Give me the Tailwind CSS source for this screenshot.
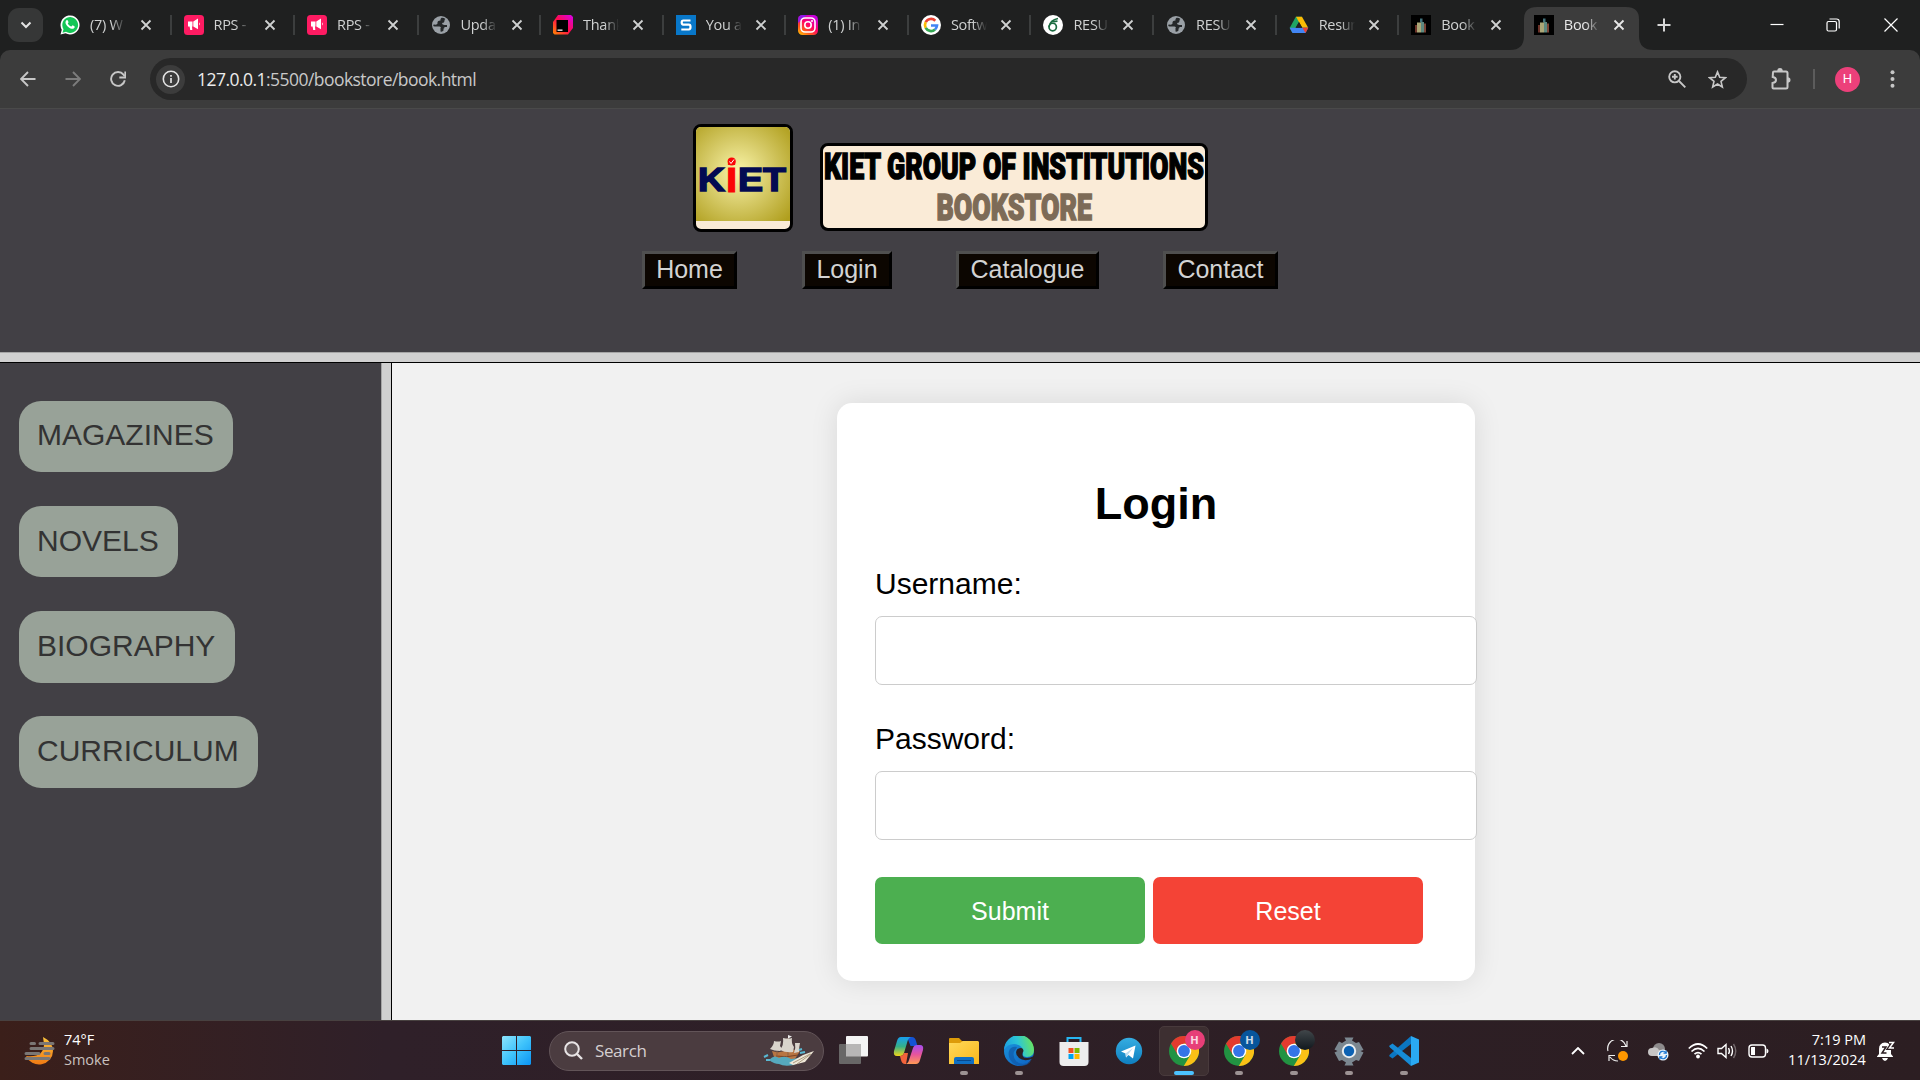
<!DOCTYPE html>
<html lang="en">
<head>
<meta charset="utf-8">
<title>Bookstore</title>
<script src="https://cdn.jsdelivr.net/npm/@tailwindcss/browser@4"></script>
</head>
<body class="w-[1920px] h-[1080px] overflow-hidden flex flex-col bg-[#1f2020] font-['Liberation_Sans',Arial,sans-serif]">
<svg class="absolute w-0 h-0">
  <defs>
    <symbol id="x" viewBox="0 0 12 12"><path d="M1.5 1.5l9 9M10.500 1.5l-9 9" stroke="currentColor" stroke-width="1.8" fill="none"/></symbol>
    <symbol id="horn" viewBox="0 0 20 20"><rect width="20" height="20" rx="3.500" fill="#fe1b62"/><path d="M4 6.500h4.500v5H8L8.300 15H6.200L5.600 11.500H4zM9.300 6.500L14 3.500v10.800L9.300 11.500z" fill="#fff"/><path d="M15 7.200q1.800 1.600 0 3.400z" fill="#fff"/></symbol>
    <symbol id="globe" viewBox="0 0 20 20"><circle cx="10" cy="10" r="9" fill="#9aa0a6"/><path d="M10.500 2.800Q9 4 9.500 5.500 6 5.500 6.500 8.500 6.500 10 3 9.500q-.8 0-.8.800 0 1.200 1.500 1.200H8.500q1.500 0 1.500 2H12.500q1 0 1-1.500H16V10H13.500q-2.500 0-2.500-2 2.500 0 2.500-2.500 0-1.500 1-1.500Q12.500 2.500 10.500 2.800z" fill="#25282a"/><path d="M9.500 13v3.500q2 .5 3-1V13z" fill="#25282a"/></symbol>
    <symbol id="book" viewBox="0 0 20 20"><rect width="20" height="20" fill="#000"/><path d="M9 3.500h2.500v4H9z" fill="#42727c"/><path d="M4 10h2v7.500H4z" fill="#6c3329"/><path d="M6 7.500h4v10H6z" fill="#aba677"/><path d="M10 7h3v10.500h-3z" fill="#5d8980"/><path d="M13 8.500h2v9h-2z" fill="#7c4537"/></symbol>
    <symbol id="chrome" viewBox="0 0 30 30">
      <circle cx="15" cy="15" r="15" fill="#229342"/>
      <path d="M2 7.500A15 15 0 0 1 28 7.500H15L8.700 18.700z" fill="#e33b2e"/>
      <path d="M28 7.500H15l6.500 11.200L14.800 30A15 15 0 0 0 28 7.500z" fill="#fbc116"/>
      <circle cx="15" cy="15" r="7.300" fill="#fff"/><circle cx="15" cy="15" r="5.900" fill="#3474e8"/>
    </symbol>
    <linearGradient id="ig" x1="0" y1="1" x2=".7" y2="0"><stop offset="0" stop-color="#ffd000"/><stop offset=".3" stop-color="#ff5a1a"/><stop offset=".6" stop-color="#ff0069"/><stop offset="1" stop-color="#c800e0"/></linearGradient>
    <linearGradient id="jb" x1="0" y1="1" x2="1" y2="0"><stop offset="0" stop-color="#ff8a00"/><stop offset=".5" stop-color="#ff0a4c"/><stop offset="1" stop-color="#d500f0"/></linearGradient>
    <radialGradient id="gold" cx=".45" cy=".48" r=".72"><stop offset="0" stop-color="#faf5a8"/><stop offset=".45" stop-color="#d8cd6c"/><stop offset="1" stop-color="#b09f1e"/></radialGradient>
    <linearGradient id="win" gradientUnits="userSpaceOnUse" x1="0" y1="0" x2="29" y2="29"><stop offset="0" stop-color="#8de5fd"/><stop offset=".5" stop-color="#3fc3fb"/><stop offset="1" stop-color="#0b94f4"/></linearGradient>
    <linearGradient id="fold" x1="0" y1="0" x2="1" y2="1"><stop offset="0" stop-color="#ffd95a"/><stop offset="1" stop-color="#fab81b"/></linearGradient>
    <linearGradient id="edge1" x1="0" y1=".6" x2="1" y2=".4"><stop offset="0" stop-color="#1b9de2"/><stop offset=".5" stop-color="#2cc6d6"/><stop offset="1" stop-color="#6be55a"/></linearGradient>
    <linearGradient id="edge2" x1="0" y1="0" x2=".7" y2="1"><stop offset="0" stop-color="#1c9be0"/><stop offset="1" stop-color="#0f66c4"/></linearGradient>
    <linearGradient id="co1" x1="0" y1="0" x2="0" y2="1"><stop offset="0" stop-color="#189ff0"/><stop offset=".5" stop-color="#35b089"/><stop offset="1" stop-color="#f0d619"/></linearGradient>
    <linearGradient id="co2" x1="0" y1="0" x2="0" y2="1"><stop offset="0" stop-color="#a54cf0"/><stop offset=".5" stop-color="#e7559b"/><stop offset="1" stop-color="#ff9a55"/></linearGradient>
    <linearGradient id="sun" x1="0" y1="0" x2="0" y2="1"><stop offset="0" stop-color="#fcc33c"/><stop offset="1" stop-color="#f07a14"/></linearGradient>
    <linearGradient id="tg" x1="0" y1="0" x2="0" y2="1"><stop offset="0" stop-color="#35ade1"/><stop offset="1" stop-color="#0f7fc0"/></linearGradient>
  </defs>
</svg>

<!-- Tab strip -->
<header class="h-[50px] shrink-0 flex items-center text-[#cfd1d1] font-['Open_Sans','Noto_Sans',sans-serif] text-[14.500px] tracking-[-0.3px]">
  <div class="ml-2 w-[35px] h-[34px] rounded-[11px] bg-[#363737] flex items-center justify-center shrink-0"><svg class="w-3 h-2" viewBox="0 0 12 8"><path d="M1.500 1.500L6 6l4.500-4.500" stroke="#e3e3e3" stroke-width="2" fill="none"/></svg></div>
  <nav class="ml-[5px] flex h-full">
    <div class="w-[123.5px] flex items-center pl-3"><svg class="w-5 h-5 shrink-0" viewBox="0 0 20 20"><path d="M.5 19.500l1.300-4.800A9.500 9.500 0 1 1 5.500 18.300z" fill="#fff"/><path d="M2.500 17.700l1-3.500A7.900 7.900 0 1 1 6 16.700z" fill="#14c656"/><path d="M6.300 5.500c1-1 1.500-.2 2.200 1.600.3.800-1.200 1-.5 2 .8 1.200 1.800 2 3 2.500.7.300 1.200-1.600 2-1.200 1.700.9 2 1 1.600 2-1 2-3.600 1.600-6-.2C6.500 10.700 5.200 8.500 5.500 7c.1-.6.400-1.100.8-1.500z" fill="#fff"/></svg><span class="ml-2.5 w-9 overflow-hidden whitespace-nowrap [mask-image:linear-gradient(to_right,#000_60%,transparent)]">(7) W</span><svg class="ml-[14px] w-3 h-3"><use href="#x"/></svg><i class="ml-auto w-0.5 h-5 bg-[#3c3e3e]"></i></div>
    <div class="w-[123.5px] flex items-center pl-3"><svg class="w-5 h-5 shrink-0"><use href="#horn"/></svg><span class="ml-2.5 w-9 overflow-hidden whitespace-nowrap [mask-image:linear-gradient(to_right,#000_60%,transparent)]">RPS -</span><svg class="ml-[14px] w-3 h-3"><use href="#x"/></svg><i class="ml-auto w-0.5 h-5 bg-[#3c3e3e]"></i></div>
    <div class="w-[123.5px] flex items-center pl-3"><svg class="w-5 h-5 shrink-0"><use href="#horn"/></svg><span class="ml-2.5 w-9 overflow-hidden whitespace-nowrap [mask-image:linear-gradient(to_right,#000_60%,transparent)]">RPS -</span><svg class="ml-[14px] w-3 h-3"><use href="#x"/></svg><i class="ml-auto w-0.5 h-5 bg-[#3c3e3e]"></i></div>
    <div class="w-[122.6px] flex items-center pl-3"><svg class="w-5 h-5 shrink-0"><use href="#globe"/></svg><span class="ml-2.5 w-9 overflow-hidden whitespace-nowrap [mask-image:linear-gradient(to_right,#000_60%,transparent)]">Upda</span><svg class="ml-[14px] w-3 h-3"><use href="#x"/></svg><i class="ml-auto w-0.5 h-5 bg-[#3c3e3e]"></i></div>
    <div class="w-[122.6px] flex items-center pl-3"><svg class="w-5 h-5 shrink-0" viewBox="0 0 20 20"><path d="M5 0h13l2 2v11l-5 6.500H1.500L0 18V7z" fill="url(#jb)"/><path d="M3.500 5H15v12H3.500z" fill="#000"/><path d="M4.500 14.500h5v1.300h-5z" fill="#fff"/></svg><span class="ml-2.5 w-9 overflow-hidden whitespace-nowrap [mask-image:linear-gradient(to_right,#000_60%,transparent)]">Thank</span><svg class="ml-[13px] w-3 h-3"><use href="#x"/></svg><i class="ml-auto w-0.5 h-5 bg-[#3c3e3e]"></i></div>
    <div class="w-[122.6px] flex items-center pl-3"><svg class="w-5 h-5 shrink-0" viewBox="0 0 20 20"><path d="M0 0h20v20H0z" fill="#0877c9"/><path d="M14.500 5.500H7.300Q5.700 5.500 5.700 7.500t1.600 2.200h5.500q1.700 0 1.700 2.300t-1.700 2.500H5.300" fill="none" stroke="#fff" stroke-width="2.200"/></svg><span class="ml-2.5 w-9 overflow-hidden whitespace-nowrap [mask-image:linear-gradient(to_right,#000_60%,transparent)]">You a</span><svg class="ml-[13px] w-3 h-3"><use href="#x"/></svg><i class="ml-auto w-0.5 h-5 bg-[#3c3e3e]"></i></div>
    <div class="w-[122.6px] flex items-center pl-3"><svg class="w-5 h-5 shrink-0" viewBox="0 0 20 20"><rect width="20" height="20" rx="4.500" fill="url(#ig)"/><path d="M0 8V4.500Q0 0 4.500 0H9z" fill="#7a1cff" opacity=".8"/><rect x="3" y="3" width="14" height="14" rx="4" fill="none" stroke="#fff" stroke-width="1.600"/><circle cx="10" cy="10" r="3.200" fill="none" stroke="#fff" stroke-width="1.600"/><circle cx="14" cy="6" r="1" fill="#fff"/></svg><span class="ml-2.5 w-[34px] overflow-hidden whitespace-nowrap [mask-image:linear-gradient(to_right,#000_60%,transparent)]">(1) In</span><svg class="ml-[15px] w-3 h-3"><use href="#x"/></svg><i class="ml-auto w-0.5 h-5 bg-[#3c3e3e]"></i></div>
    <div class="w-[122.6px] flex items-center pl-3"><svg class="w-5 h-5 shrink-0" viewBox="0 0 20 20"><circle cx="10" cy="10" r="10" fill="#fff"/><g fill="none" stroke-width="2.700"><path d="M14.300 5.700A6 6 0 0 0 4.700 7.200" stroke="#ea4335"/><path d="M4.700 7.200a6 6 0 0 0 0 5.600" stroke="#fbbc05"/><path d="M4.700 12.800a6 6 0 0 0 9.300 1.700" stroke="#34a853"/><path d="M14 14.500a6 6 0 0 0 2-4H10" stroke="#4285f4"/></g></svg><span class="ml-2.5 w-9 overflow-hidden whitespace-nowrap [mask-image:linear-gradient(to_right,#000_60%,transparent)]">Softw</span><svg class="ml-[13px] w-3 h-3"><use href="#x"/></svg><i class="ml-auto w-0.5 h-5 bg-[#3c3e3e]"></i></div>
    <div class="w-[122.6px] flex items-center pl-3"><svg class="w-5 h-5 shrink-0" viewBox="0 0 20 20"><circle cx="10" cy="10" r="10" fill="#fff"/><path d="M15 3.500Q7 5 6 12M14.500 6Q11 7 9.500 6" stroke="#1b6b41" stroke-width="1.500" fill="none"/><ellipse cx="9.700" cy="12" rx="3.700" ry="3.800" fill="none" stroke="#1b6b41" stroke-width="1.700"/></svg><span class="ml-2.5 w-9 overflow-hidden whitespace-nowrap [mask-image:linear-gradient(to_right,#000_60%,transparent)]">RESU</span><svg class="ml-[13px] w-3 h-3"><use href="#x"/></svg><i class="ml-auto w-0.5 h-5 bg-[#3c3e3e]"></i></div>
    <div class="w-[122.6px] flex items-center pl-3"><svg class="w-5 h-5 shrink-0"><use href="#globe"/></svg><span class="ml-2.5 w-9 overflow-hidden whitespace-nowrap [mask-image:linear-gradient(to_right,#000_60%,transparent)]">RESU</span><svg class="ml-[13px] w-3 h-3"><use href="#x"/></svg><i class="ml-auto w-0.5 h-5 bg-[#3c3e3e]"></i></div>
    <div class="w-[122.6px] flex items-center pl-3"><svg class="w-5 h-5 shrink-0" viewBox="0 0 20 20"><path d="M6.800 1.800h6L10 7 3.500 18 .7 13z" fill="#1fa463"/><path d="M7 1.800h6l6.200 11h-6z" fill="#fbbc04"/><path d="M.7 12.800h18.500L16.500 18h-13z" fill="#4285f4"/><path d="M13.300 12.800h6L16.500 18z" fill="#ea4335"/><path d="M10 7l3.300 5.800H6.700z" fill="#1f2020"/></svg><span class="ml-2.5 w-9 overflow-hidden whitespace-nowrap [mask-image:linear-gradient(to_right,#000_60%,transparent)]">Resum</span><svg class="ml-[13px] w-3 h-3"><use href="#x"/></svg><i class="ml-auto w-0.5 h-5 bg-[#3c3e3e]"></i></div>
    <div class="w-[122.6px] flex items-center pl-3"><svg class="w-5 h-5 shrink-0"><use href="#book"/></svg><span class="ml-2.5 w-9 overflow-hidden whitespace-nowrap [mask-image:linear-gradient(to_right,#000_60%,transparent)]">Book</span><svg class="ml-[13px] w-3 h-3"><use href="#x"/></svg></div>
    <div class="relative w-[122.8px] flex items-center pl-3 text-[#e8e8e8]"><svg class="absolute -left-3 top-[7px] w-[146px] h-[43px]" viewBox="0 0 146 43"><path d="M0 43Q14 43 14 29V12Q14 0 27 0H116Q129 0 129 12V29Q129 43 144 43z" fill="#3c3c3c"/></svg><svg class="relative w-5 h-5 shrink-0"><use href="#book"/></svg><span class="relative ml-2.5 w-9 overflow-hidden whitespace-nowrap [mask-image:linear-gradient(to_right,#000_60%,transparent)]">Book</span><svg class="relative ml-[13px] w-3 h-3"><use href="#x"/></svg></div>
  </nav>
  <svg class="ml-[12px] w-[14px] h-[14px] shrink-0" viewBox="0 0 14 14"><path d="M7 .5v13M.5 7h13" stroke="#d6d6d6" stroke-width="2"/></svg>
  <svg class="ml-auto w-[14px] h-[14px]" viewBox="0 0 14 14"><path d="M.5 6.500h13" stroke="#fff" stroke-width="1.200"/></svg>
  <svg class="ml-[42px] w-[14px] h-[14px]" viewBox="0 0 14 14"><rect x="1" y="3.500" width="9.500" height="9.500" rx="1.500" stroke="#fff" stroke-width="1.200" fill="none"/><path d="M3.500 1H10.500q2.700 0 2.700 2.700V10.500" stroke="#fff" stroke-width="1.200" fill="none"/></svg>
  <svg class="ml-[44px] mr-[22px] w-[14px] h-[14px]" viewBox="0 0 14 14"><path d="M.5.5l13 13M13.500.5l-13 13" stroke="#fff" stroke-width="1.200"/></svg>
</header>

<!-- Address bar -->
<section class="h-[59px] shrink-0 bg-[#3c3c3c] rounded-t-[10px] border-b border-[#4a4a4a] flex items-center text-[#c7c7c7]">
  <svg class="ml-5 w-4 h-4" viewBox="0 0 16 16"><path d="M15.500 8H1.500M8 1L1 8l7 7" stroke="currentColor" stroke-width="1.900" fill="none"/></svg>
  <svg class="ml-[29px] w-4 h-4 text-[#7c7c7c]" viewBox="0 0 16 16"><path d="M.5 8h14M8 1l7 7-7 7" stroke="currentColor" stroke-width="1.900" fill="none"/></svg>
  <svg class="ml-[29px] w-4 h-4" viewBox="0 0 16 16"><path d="M14.800 9.300A6.900 6.900 0 1 1 13.500 3.700L14.500 5" stroke="currentColor" stroke-width="1.900" fill="none"/><path d="M15.300.5v6H9.300" fill="none" stroke="currentColor" stroke-width="1.900"/></svg>
  <div class="ml-[24px] w-[1597px] h-[42px] rounded-full bg-[#282828] flex items-center">
    <div class="ml-[6px] w-[29px] h-[29px] rounded-full bg-[#3c3c3c] flex items-center justify-center"><svg class="w-[18px] h-[18px]" viewBox="0 0 18 18"><circle cx="9" cy="9" r="7.700" stroke="#e3e3e3" stroke-width="1.600" fill="none"/><path d="M9 8v5M9 5v1.700" stroke="#e3e3e3" stroke-width="1.700"/></svg></div>
    <div class="ml-[12px] font-['Open_Sans','Noto_Sans',sans-serif] text-[17.500px] tracking-[-0.54px] text-[#c9c9c9] whitespace-nowrap"><span class="text-[#ececec]">127.0.0.1</span>:5500/bookstore/book.html</div>
    <svg class="ml-auto w-[18px] h-[18px]" viewBox="0 0 18 18"><circle cx="6.800" cy="6.800" r="5.600" stroke="currentColor" stroke-width="1.900" fill="none"/><path d="M11 11l6.300 6.300M6.800 4v5.600M4 6.800h5.600" stroke="currentColor" stroke-width="1.900"/></svg>
    <svg class="ml-[22px] mr-[20px] w-[19px] h-[19px]" viewBox="0 0 20 20"><path d="M10 2l2.300 5.600 6 .5-4.600 3.900 1.400 5.900L10 14.700l-5.100 3.200L6.300 12 1.700 8.100l6-.5z" stroke="currentColor" stroke-width="1.700" fill="none"/></svg>
  </div>
  <svg class="ml-[24px] w-[22px] h-[24px]" viewBox="0 0 22 24"><path d="M2 5.500q0-1 1-1H15q1.500 0 1.500 1.500V20q0 1.500-1.500 1.500H2.500q-1 0-1-1V16Q5 15.500 5 13t-3.300-3z" stroke="currentColor" stroke-width="2" fill="none"/><path d="M6.200 4.500a2.800 3.400 0 0 1 5.600 0zM16.500 10.200a3 2.800 0 0 1 0 5.600z" fill="currentColor"/></svg>
  <i class="ml-[20px] w-0.5 h-5 bg-[#5c5c5c]"></i>
  <div class="ml-[20px] w-[25px] h-[25px] rounded-full bg-[#ec407a] text-white text-[13px] flex items-center justify-center font-['Roboto',sans-serif]">H</div>
  <svg class="ml-[30px] w-[5px] h-[18px]" viewBox="0 0 5 18"><g fill="currentColor"><circle cx="2.500" cy="2.200" r="2"/><circle cx="2.500" cy="9" r="2"/><circle cx="2.500" cy="15.800" r="2"/></g></svg>
</section>

<!-- Top frame -->
<section class="h-[243px] shrink-0 bg-[#424045] flex flex-col items-center pt-[15px]">
  <div class="flex items-end gap-[27px] h-[108px] -ml-[19px]">
    <div class="w-[100px] h-[108px] border-[3px] border-black rounded-[8px] bg-[#faebd7] overflow-hidden">
      <svg class="w-full h-[94px]" viewBox="0 0 94 94"><rect width="94" height="94" fill="url(#gold)"/>
        <g font-family="Liberation Sans, Arial" font-weight="bold" fill="#030a52" stroke="#030a52" stroke-width="1.500"><text x="2" y="64" font-size="33.500" textLength="27" lengthAdjust="spacingAndGlyphs">K</text><text x="42" y="64" font-size="33.500" textLength="48" lengthAdjust="spacingAndGlyphs">ET</text><text x="29.500" y="64.500" font-size="44" fill="#fb0505" stroke="#fb0505" stroke-width="1">i</text></g>
        <circle cx="35.700" cy="34.500" r="4" fill="#fb0505"/><path d="M33.500 34.500l1.500 2 3-4" stroke="#fff" stroke-width="1" fill="none"/></svg>
    </div>
    <div class="w-[388px] h-[88px] mb-px border-[3px] border-black rounded-[8px] bg-[#faebd7]">
      <svg class="w-[382px] h-[82px]" viewBox="0 0 382 82"><g font-family="Roboto, Open Sans, sans-serif" font-weight="900" font-size="37" stroke-width="1.500"><text x="1" y="33" textLength="380" lengthAdjust="spacingAndGlyphs" stroke="#000">KIET GROUP OF INSTITUTIONS</text><text x="113.500" y="74" textLength="155.500" lengthAdjust="spacingAndGlyphs" fill="#7d6b57" stroke="#7d6b57">BOOKSTORE</text></g></svg>
    </div>
  </div>
  <nav class="mt-[19px] flex text-[25px] leading-[30px] text-[#d3d3d3] gap-[64px]">
    <a class="h-[38px] w-[95px] mr-px text-center border-[3px] border-t-[#4f4f4f] border-l-[#4f4f4f] border-r-black border-b-black bg-[#0c0601]">Home</a>
    <a class="h-[38px] w-[90px] text-center border-[3px] border-t-[#4f4f4f] border-l-[#4f4f4f] border-r-black border-b-black bg-[#0c0601]">Login</a>
    <a class="h-[38px] w-[143px] text-center border-[3px] border-t-[#4f4f4f] border-l-[#4f4f4f] border-r-black border-b-black bg-[#0c0601]">Catalogue</a>
    <a class="h-[38px] w-[115px] text-center border-[3px] border-t-[#4f4f4f] border-l-[#4f4f4f] border-r-black border-b-black bg-[#0c0601]">Contact</a>
  </nav>
</section>
<div class="h-[11px] shrink-0 bg-[#d0d0d0] border-t border-t-[#a5a5a5] border-b border-b-black"></div>

<!-- Lower frames -->
<main class="h-[657px] shrink-0 flex">
  <aside class="w-[381px] bg-[#424045] pt-[38px] pl-[19px] flex flex-col items-start gap-[34px] text-[30px] leading-[34px] text-[#333]">
    <a class="h-[71px] pl-[18px] pr-[19.500px] pt-[17px] rounded-[22px] bg-[#98a298]">MAGAZINES</a>
    <a class="h-[71px] pl-[18px] pr-[19.500px] pt-[18px] rounded-[22px] bg-[#98a298]">NOVELS</a>
    <a class="h-[72px] pl-[18px] pr-[19.500px] pt-[18px] rounded-[22px] bg-[#98a298] -mb-px">BIOGRAPHY</a>
    <a class="h-[72px] pl-[18px] pr-[19.500px] pt-[18px] rounded-[22px] bg-[#98a298]">CURRICULUM</a>
  </aside>
  <div class="w-[11px] bg-[#d0d0d0] border-l border-l-[#a5a5a5] border-r border-r-black"></div>
  <section class="flex-1 bg-[#f1f1f1] pt-10 pl-[445px]">
    <form class="w-[638px] h-[578px] bg-white rounded-[15px] shadow-[0_0_28px_rgba(0,0,0,0.1)] px-[38px] text-black text-[30px] leading-[34px]">
      <h2 class="pt-[75px] text-center text-[45px] leading-[52px] font-bold">Login</h2>
      <label class="block mt-[37px]">Username:</label>
      <input class="block mt-[15px] w-[602px] h-[69px] border border-[#ccc] rounded-[7px] bg-white">
      <label class="block mt-[37px]">Password:</label>
      <input class="block mt-[15px] w-[602px] h-[69px] border border-[#ccc] rounded-[7px] bg-white">
      <div class="mt-[37px] flex gap-2 text-[25px] text-white">
        <button type="button" class="w-[270px] h-[67px] rounded-[7px] bg-[#4caf50]">Submit</button>
        <button type="button" class="w-[270px] h-[67px] rounded-[7px] bg-[#f44336]">Reset</button>
      </div>
    </form>
  </section>
</main>

<!-- Taskbar -->
<footer class="h-[60px] shrink-0 border-t border-[#484140] bg-linear-to-r from-[#3b1f1a] via-[#2f2029] via-20% to-[#2c1e22] flex items-center font-['Open_Sans','Noto_Sans',sans-serif]">
  <svg class="ml-[24px] w-[31px] h-[30px] shrink-0" viewBox="0 0 31 30"><path d="M19 1Q29 6 29 15A14 13.500 0 0 1 2 20Q20 22 20 8z" fill="url(#sun)"/><path d="M7 7.500h3.500M16 7.500h13M7 12.500h22M2 17.500h13M21 17.500h4M2 22.500h23" stroke="#7b7775" stroke-width="3" stroke-linecap="round"/></svg>
  <div class="ml-[9px] w-[60px] pb-0.5 text-[14.500px] leading-5 tracking-[0px] text-white">74°F<br><span class="text-[#c9c1bf]">Smoke</span></div>
  <svg class="ml-[378px] w-[29px] h-[29px] shrink-0" viewBox="0 0 29 29"><path d="M1 0h13v14H0V1zM15 0h13l1 1v13H15zM0 15h14v14H1l-1-1zM15 15h14v13l-1 1H15z" fill="url(#win)"/></svg>
  <div class="ml-[18px] w-[275px] h-10 shrink-0 rounded-full bg-[#4b3c40] border border-[#625458] flex items-center">
    <svg class="ml-[14px] w-[19px] h-[19px]" viewBox="0 0 19 19"><circle cx="8" cy="8" r="6.800" stroke="#e8e4e5" stroke-width="2" fill="#625659"/><path d="M13 13l5 5" stroke="#e8e4e5" stroke-width="2.400"/></svg>
    <span class="ml-[12px] text-[17px] tracking-[-0.4px] text-[#d5cfd0]">Search</span>
    <svg class="ml-auto mr-[8px] w-[52px] h-[32px]" viewBox="0 0 52 32">
      <path d="M9 16q8 3 18-2l10 2-5 8-20 1z" fill="#b87542"/><path d="M13 21q10 2 22-1" stroke="#7b4425" fill="none"/>
      <path d="M25 3v18M14 8v12M34 8v10" stroke="#8b6245"/><path d="M11 6q4 1 7 0l-1 5q3 3 0 5-6 0-10-2 4-4 4-8zM20 3q6 1 9 0-1 5 2 9-1 5-1 5-7 1-13-2 4-5 3-12zM32 8l5 0q-1 4-1 9l-5 1q2-5 1-10z" fill="#d9d4cc"/><path d="M25 0l4 1.500-4 2z" fill="#eee"/>
      <path d="M6 25q5-6 10-2 6-3 12 1l9-1-6 7q-10 2-15-1-5 0-10-4z" fill="#56a9bd"/><path d="M1 22l4-2M3 25l4 0M36 15l3-1M37 18l5-1" stroke="#59b9d3" stroke-width="2"/>
      <path d="M26 28l14-8 11-4-9 11-12 3z" fill="#efe8d8"/><path d="M30 28l17-9M34 29l14-10" stroke="#a99a7e"/></svg>
  </div>
  <svg class="ml-[15px] w-[29px] h-[29px] shrink-0" viewBox="0 0 29 29"><rect x="7" y="0" width="22" height="20.500" rx="1" fill="#f4f4f4"/><rect x="0" y="8" width="22" height="20" rx="1" fill="#686767"/><rect x="7" y="8" width="15" height="12.500" fill="#b7b6b6"/></svg>
  <svg class="ml-[25px] w-[31px] h-[30px] shrink-0" viewBox="0 0 31 30"><path d="M14 1h5q3 0 4 4l1.500 5h-7z" fill="#1453d4"/><path d="M8 1h10q-3 1-4 6l-3 10q-1 3-4 3H4Q0 20 1 15L4 5Q5 1 8 1z" fill="url(#co1)"/><path d="M7 20q3 0 4-3h4l-2 11h-1q-3 0-4-4z" fill="#f2633b"/><path d="M23 28H12q3 0 4-4l4-12q1-3 4-3h3q4 0 3 5l-3 10q-1 4-4 4z" fill="url(#co2)"/></svg>
  <div class="ml-[12px] flex shrink-0">
    <div class="w-[55px] h-[50px] flex flex-col items-center pt-[10px]"><svg class="w-[30px] h-[30px]" viewBox="0 0 30 30"><path d="M0 3q0-1 1-1h9l3 3H28v6H0z" fill="#dd9b09"/><path d="M0 7h11l3-2H29l1 1v22H0z" fill="url(#fold)"/><path d="M5 28v-5q0-2 2-2h16q2 0 2 2v5z" fill="#0f6fc4"/><path d="M8 24.500h14" stroke="#07498d"/></svg><i class="mt-[5px] w-2 h-1 rounded-full bg-[#9c9293]"></i></div>
    <div class="w-[55px] h-[50px] flex flex-col items-center pt-[10px]"><svg class="w-[30px] h-[30px]" viewBox="0 0 30 30"><circle cx="15" cy="15" r="15" fill="url(#edge2)"/><path d="M0 14A15 15 0 0 1 30 14Q30 21 23 21 18 20.500 19 18 20 9 10 8 3 8 0 14z" fill="url(#edge1)"/><path d="M12 13Q7 18 12 25q6 6 15 0Q22 32 12 29 3 24 5 15q2-5 8-4z" fill="#0f59a8" opacity=".7"/><path d="M13.500 13Q19 10 19.500 15 17 19 20 21.500 25 23 31 19.500L29 22.500Q20 26 15 22 10 17 13.500 13z" fill="#2b2024"/></svg><i class="mt-[5px] w-2 h-1 rounded-full bg-[#9c9293]"></i></div>
    <div class="w-[55px] h-[50px] flex flex-col items-center pt-[10px]"><svg class="w-[30px] h-[30px]" viewBox="0 0 30 30"><path d="M8.500 7V2h13v5" stroke="#27b6f1" stroke-width="2" fill="none"/><path d="M.5 6h29v20q0 4-4 4h-21q-4 0-4-4z" fill="#ededed"/><path d="M9.500 12h5v5h-5z" fill="#f25022"/><path d="M15.500 12h5v5h-5z" fill="#7fba00"/><path d="M9.500 18h5v5h-5z" fill="#00a4ef"/><path d="M15.500 18h5v5h-5z" fill="#ffb900"/></svg></div>
    <div class="w-[55px] h-[50px] flex flex-col items-center pt-[10px]"><svg class="w-[30px] h-[30px]" viewBox="0 0 30 30"><circle cx="15" cy="15" r="13.200" fill="url(#tg)"/><path d="M7 15.500l14.500-6-2.500 13-4.500-3.500-2.500 2.500-.5-4z" fill="#fff"/><path d="M11.500 17.500L19 12l-5 6.500-2 3z" fill="#bcdcf0"/></svg></div>
    <div class="w-[55px] flex justify-center"><div class="relative w-[50px] h-[50px] rounded-[5px] bg-[#3d2f31] border border-[#483a3c] flex flex-col items-center pt-[9px]"><svg class="w-[30px] h-[30px]"><use href="#chrome"/></svg><span class="absolute left-[25px] top-[3px] w-5 h-5 rounded-full bg-[#e73e78] text-white/80 text-[11px] leading-5 text-center font-bold">H</span><i class="mt-[5px] w-5 h-1 rounded-full bg-[#4cc2ff]"></i></div></div>
    <div class="relative w-[55px] h-[50px] flex flex-col items-center pt-[10px]"><svg class="w-[30px] h-[30px]"><use href="#chrome"/></svg><span class="absolute left-[28.500px] top-1 w-5 h-5 rounded-full bg-[#07559c] text-white/80 text-[11px] leading-5 text-center font-bold">H</span><i class="mt-[5px] w-2 h-1 rounded-full bg-[#9c9293]"></i></div>
    <div class="relative w-[55px] h-[50px] flex flex-col items-center pt-[10px]"><svg class="w-[30px] h-[30px]"><use href="#chrome"/></svg><span class="absolute left-[28.500px] top-1 w-5 h-5 rounded-full bg-linear-to-b from-[#41474a] to-[#11181e]"></span><i class="mt-[5px] w-2 h-1 rounded-full bg-[#9c9293]"></i></div>
    <div class="w-[55px] h-[50px] flex flex-col items-center pt-[10px]"><svg class="w-[30px] h-[30px]" viewBox="0 0 30 30"><path d="M12 4.500L10.500 1.500h9L18 4.500l4 2.500 3-1 4.500 8-3 1 3 1.500L25 25l-3-1-4 2.500 1.500 3h-9l1.500-3L8 24l-3 1L.5 16.500 3.500 15l-3-1.500L5 5.500 8 7z" fill="#7b8790"/><circle cx="15" cy="15" r="7.200" fill="#e8edf0"/><circle cx="15" cy="15" r="5.200" fill="#0c62b3"/></svg><i class="mt-[5px] w-2 h-1 rounded-full bg-[#9c9293]"></i></div>
    <div class="w-[55px] h-[50px] flex flex-col items-center pt-[10px]"><svg class="w-[30px] h-[30px]" viewBox="0 0 30 30"><path d="M22 8L3.500 22.500 0 20 1 18.500 22 0z" fill="#0b76c2"/><path d="M22 22L3.500 7.500 0 10l1 1.500L22 30z" fill="#168bd6"/><path d="M22 0l8 3.500v23L22 30z" fill="#2aa9f3"/></svg><i class="mt-[5px] w-2 h-1 rounded-full bg-[#9c9293]"></i></div>
  </div>
  <svg class="ml-auto w-[14px] h-[8px]" viewBox="0 0 14 8"><path d="M1 7l6-6 6 6" stroke="#fff" stroke-width="1.800" fill="none"/></svg>
  <svg class="ml-[22px] w-[22px] h-[22px]" viewBox="0 0 22 22"><path d="M1 11A9 9 0 0 1 19 6M20 1v5.500h-6M2 21v-5.500h6M3 17q3 4 8 4" stroke="#eee" stroke-width="1.200" fill="none"/><circle cx="16" cy="16" r="5" fill="#ff9800"/></svg>
  <svg class="ml-[19px] w-[21px] h-[20px]" viewBox="0 0 21 20"><circle cx="11" cy="8" r="6" fill="#8d8a8b"/><path d="M4 15a4 4 0 0 1 0-8q5-2 7 2 5 0 5 6z" fill="#c7c5c5"/><circle cx="15" cy="14" r="5.500" fill="#e8f3fc"/><path d="M11.500 14a3.500 3.500 0 0 1 6.500-2M18.500 14a3.500 3.500 0 0 1-6.500 2M18.200 9.500v2.700h-2.700M11.800 18.500v-2.700h2.700" stroke="#1976d2" stroke-width="1.200" fill="none"/></svg>
  <svg class="ml-[19px] w-[20px] h-[16px]" viewBox="0 0 20 16"><g stroke="#fff" stroke-width="1.700" fill="none"><path d="M.8 5.500Q10-3.500 19.200 5.500M3.500 8.500Q10 2.200 16.500 8.500M6.500 11.200Q10 8 13.500 11.200"/></g><circle cx="10" cy="13.500" r="1.900" fill="#fff"/></svg>
  <svg class="ml-[9px] w-[21px] h-[18px]" viewBox="0 0 21 18"><path d="M1 6.500h3.500L9 2.500v13L4.500 11.500H1z" stroke="#fff" stroke-width="1.400" fill="none"/><path d="M11.500 6q1.800 3 0 6M14 4q3 5 0 10" stroke="#fff" stroke-width="1.400" fill="none"/><path d="M16.500 2q4.500 7 0 14" stroke="#73686b" stroke-width="1.400" fill="none"/></svg>
  <svg class="ml-[10px] w-[21px] h-[14px]" viewBox="0 0 21 14"><rect x="1" y="1" width="16.500" height="12" rx="3" stroke="#fff" stroke-width="1.400" fill="none"/><path d="M3 3.500q0-.5.5-.5H7v8H3zM18.500 4.500Q20.500 5 20.500 7t-2 2.500z" fill="#fff"/></svg>
  <div class="ml-[14px] w-[83px] pb-0.5 text-right text-white text-[14.500px] leading-5 tracking-[0.1px] whitespace-nowrap"><span class="tracking-[0px]">7:19 PM</span><br>11/13/2024</div>
  <svg class="ml-[10px] mr-[25px] w-[19px] h-[20px]" viewBox="0 0 19 20"><path d="M3 13V8Q3 2 9 1.500q6 .5 6 6.500v5l2 2.500v.5H1v-.5zM6 17h6q-1 3-3 3t-3-3z" fill="#fff"/><path d="M6 6h4l-4 6h4.500" stroke="#2c1e22" stroke-width="1.500" fill="none"/><path d="M13 1.500h4.500L13.500 7H18" stroke="#2c1e22" stroke-width="4" fill="none"/><path d="M13 1.500h4.500L13.500 7H18" stroke="#fff" stroke-width="1.500" fill="none"/></svg>
</footer>
</body>
</html>
